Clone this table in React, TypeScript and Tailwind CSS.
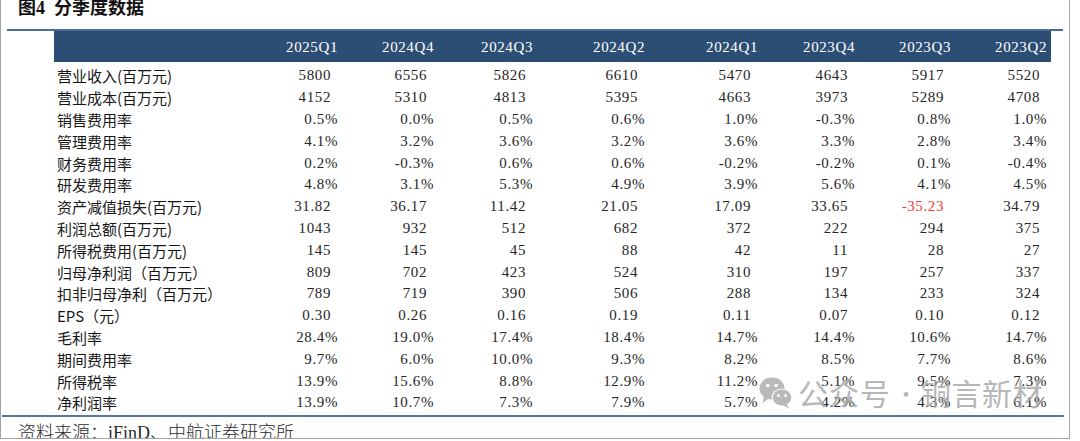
const quarters = ['2025Q1', '2024Q4', '2024Q3', '2024Q2', '2024Q1', '2023Q4', '2023Q3', '2023Q2'];

const rows: [string, string[]][] = [
  ['营业收入(百万元)', ['5800', '6556', '5826', '6610', '5470', '4643', '5917', '5520']],
  ['营业成本(百万元)', ['4152', '5310', '4813', '5395', '4663', '3973', '5289', '4708']],
  ['销售费用率', ['0.5%', '0.0%', '0.5%', '0.6%', '1.0%', '-0.3%', '0.8%', '1.0%']],
  ['管理费用率', ['4.1%', '3.2%', '3.6%', '3.2%', '3.6%', '3.3%', '2.8%', '3.4%']],
  ['财务费用率', ['0.2%', '-0.3%', '0.6%', '0.6%', '-0.2%', '-0.2%', '0.1%', '-0.4%']],
  ['研发费用率', ['4.8%', '3.1%', '5.3%', '4.9%', '3.9%', '5.6%', '4.1%', '4.5%']],
  ['资产减值损失(百万元)', ['31.82', '36.17', '11.42', '21.05', '17.09', '33.65', '-35.23', '34.79']],
  ['利润总额(百万元)', ['1043', '932', '512', '682', '372', '222', '294', '375']],
  ['所得税费用(百万元)', ['145', '145', '45', '88', '42', '11', '28', '27']],
  ['归母净利润（百万元）', ['809', '702', '423', '524', '310', '197', '257', '337']],
  ['扣非归母净利（百万元）', ['789', '719', '390', '506', '288', '134', '233', '324']],
  ['EPS（元）', ['0.30', '0.26', '0.16', '0.19', '0.11', '0.07', '0.10', '0.12']],
  ['毛利率', ['28.4%', '19.0%', '17.4%', '18.4%', '14.7%', '14.4%', '10.6%', '14.7%']],
  ['期间费用率', ['9.7%', '6.0%', '10.0%', '9.3%', '8.2%', '8.5%', '7.7%', '8.6%']],
  ['所得税率', ['13.9%', '15.6%', '8.8%', '12.9%', '11.2%', '5.1%', '9.5%', '7.3%']],
  ['净利润率', ['13.9%', '10.7%', '7.3%', '7.9%', '5.7%', '4.2%', '4.3%', '6.1%']],
];

const grid = 'grid grid-cols-[186px_102px_96px_99px_112px_113px_97px_96px_96px]';
const num = "font-['Liberation_Serif',serif] text-[15px] tracking-[0.6px]";

function WeChatMark() {
  return (
    <svg width="34" height="33" viewBox="0 0 34 33">
      <ellipse cx="13" cy="12.5" rx="12.5" ry="11" fill="#a9a9a9" />
      <path d="M5 20 L3.5 27 L10.5 22 Z" fill="#a9a9a9" />
      <circle cx="8.8" cy="9.5" r="1.8" fill="#fff" />
      <circle cx="17" cy="9.5" r="1.8" fill="#fff" />
      <ellipse cx="23" cy="21.5" rx="10.5" ry="9" fill="#fff" />
      <ellipse cx="23" cy="21.5" rx="9.3" ry="8" fill="#a9a9a9" />
      <path d="M27.5 28 L30 32.5 L23.5 29 Z" fill="#a9a9a9" />
      <circle cx="19.5" cy="19.5" r="1.5" fill="#fff" />
      <circle cx="26.5" cy="19.5" r="1.5" fill="#fff" />
    </svg>
  );
}

export default function App() {
  return (
    <div className="relative w-[1080px] h-[441px] overflow-hidden bg-white">
      <div className="w-[1070px] h-[439px] border-l border-r border-b border-[#a3a3a3] overflow-hidden">
        {/* title */}
        <div className="h-[29px] pl-[17px] overflow-hidden">
          <div className="-mt-[2px] text-[18px] leading-[20px] font-bold text-[#111] font-['Liberation_Serif','Noto_Sans_CJK_SC',serif]">
            图4&nbsp;&nbsp;分季度数据
          </div>
        </div>
        <div className="ml-[6px] w-[1056px] h-[2px] bg-[#4d6c9c]" />

        {/* table */}
        <div className="ml-[53px] w-[997px]">
          <div className={`${grid} h-[31px] bg-[#2d4e74] text-white`}>
            <div />
            {quarters.map((q) => (
              <div key={q} className={`flex items-center justify-end pr-[4px] pt-[1px] ${num}`}>{q}</div>
            ))}
          </div>
          <div className="pt-[3px]">
            {rows.map(([label, vals]) => (
              <div key={label} className={`${grid} h-[21.8px] items-center`}>
                <div className="pl-[3px] text-[15px] leading-[21px] text-[#161616] font-['Noto_Sans_CJK_SC',sans-serif] whitespace-nowrap">
                  {label}
                </div>
                {vals.map((v, i) => {
                  const pct = v.endsWith('%');
                  const neg = v === '-35.23';
                  return (
                    <div
                      key={i}
                      className={`text-right leading-[21px] ${num} ${pct ? 'pr-[4px]' : 'pr-[11px]'} ${neg ? 'text-[#ee3b2f]' : 'text-[#262626]'}`}
                    >
                      {v}
                    </div>
                  );
                })}
              </div>
            ))}
          </div>
        </div>

        <div className="mt-[1px] ml-[1px] w-[1062px] h-[2px] bg-[#5676a6]" />
        <div className="pl-[17px] pt-[5px] text-[18px] leading-[22px] text-[#2a2a2a] font-light font-['Liberation_Serif','Noto_Sans_CJK_SC',serif] whitespace-nowrap">
          资料来源：iFinD、中航证券研究所
        </div>
      </div>

      {/* watermark */}
      <div className="absolute left-[759px] top-[375px] flex items-center gap-[5px] opacity-80 pointer-events-none">
        <WeChatMark />
        <div className="flex items-center text-[30px] leading-[34px] text-[#a6a6a6] font-['Noto_Sans_CJK_SC',sans-serif] whitespace-nowrap">
          <span className="tracking-[1px]">公众号</span>
          <span className="w-[30px] text-center text-[22px]">·</span>
          <span className="tracking-[0.5px]">铜言新材</span>
        </div>
      </div>
    </div>
  );
}
